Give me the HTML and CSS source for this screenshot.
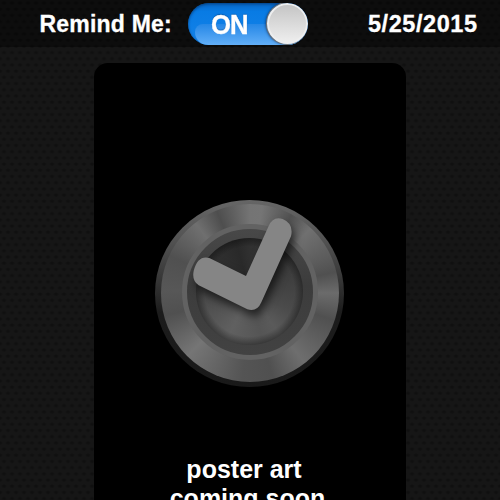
FILE: index.html
```
<!DOCTYPE html>
<html lang="en">
<head>
<meta charset="utf-8">
<title>Reminder</title>
<link rel="stylesheet" href="styles.css">
</head>
<body>
<header class="bar">
  <span class="label">Remind Me:</span>
  <div class="switch" role="switch" aria-checked="true"><span class="state">ON</span><span class="knob"></span></div>
  <time class="date">5/25/2015</time>
</header>
<main class="poster">
  <div class="badge">
    <div class="face"></div>
    <div class="ring"></div>
    <div class="well"></div>
    <svg class="check" viewBox="0 0 630 630" width="210" height="210" aria-hidden="true">
      <path d="M303 258L371 108Q384 78 413 87Q447 101 438 139L349 337Q336 367 307 358L161 286Q140 272 146 243Q158 195 193 204Z"/>
    </svg>
  </div>
  <p class="caption">poster art&nbsp;<br>coming soon</p>
</main>
</body>
</html>
```
FILE: styles.css
```
* { box-sizing: border-box; }
html, body { height: 100%; }
body {
  margin: 0;
  overflow: hidden;
  color: #fff;
  font-family: "Liberation Sans", Arial, sans-serif;
  font-weight: bold;
  background-color: #161616;
  background-image:
    radial-gradient(ellipse 3px 2px at 4px 3px, #101010 40%, transparent 100%),
    radial-gradient(ellipse 3px 2px at 4px 3px, #101010 40%, transparent 100%);
  background-size: 8px 12.4px;
  background-position: 0 0, 4px 6.2px;
}
.bar {
  display: grid;
  grid-template-columns: 187px 121px 1fr;
  height: 47px;
  background: rgba(0, 0, 0, .4);
}
.label, .date {
  font-size: 23px;
  line-height: 48px;
  letter-spacing: .2px;
  white-space: nowrap;
  -webkit-text-stroke: .3px #fff;
  stroke-linejoin: round;
}
.label { padding-left: 39.5px; }
.date { padding-left: 60px; font-size: 23.5px; letter-spacing: .55px; }
.switch {
  display: flex;
  justify-content: space-between;
  width: 120px;
  height: 42px;
  margin: 3px 0 0 1px;
  border-radius: 21px;
  position: relative;
  overflow: hidden;
  background: linear-gradient(#0866c4, #087be4 20%, #1683e8);
  box-shadow: inset 0 1px 3px #033f80;
}
.switch::before {
  content: "";
  position: absolute;
  left: 7px;
  right: 5px;
  top: 21px;
  height: 21px;
  border-radius: 12px 0 0 20px;
  background: linear-gradient(#2587e6, #62aff8);
}
.state {
  position: relative;
  padding-left: 23px;
  font-size: 27px;
  line-height: 44px;
  letter-spacing: -1px;
  transform: scaleX(.95);
  transform-origin: 23px 0;
  -webkit-text-stroke: .4px #fff;
  text-shadow: 0 -1px 1px #0758a8;
}
.knob {
  position: relative;
  width: 41px;
  height: 41px;
  border: 2px solid #eee;
  border-radius: 50%;
  background: linear-gradient(#c5c5c5, #eee);
  box-shadow: 0 0 0 1px #777, -1px 0 3px #124;
}
.poster {
  display: flex;
  flex-direction: column;
  align-items: center;
  width: 312px;
  height: 460px;
  margin: 16px 0 0 94px;
  padding-top: 137px;
  border-radius: 14px;
  background: #000;
}
.badge {
  display: grid;
  grid-template: 187px / 189px;
  flex: none;
  place-items: center;
  width: 189px;
  height: 187px;
  margin-right: 1px;
  border-radius: 50%;
  background: linear-gradient(#666, #545454 20%, #333 45%, #1c1c1c 60%, #191919);
}
.badge > * { grid-area: 1 / 1; border-radius: 50%; }
.face {
  width: 178px;
  height: 178px;
  margin-top: -1px;
  background: conic-gradient(#747474, #757575 8deg, #515151 28deg, #707070 43deg, #5c5c5c 65deg, #505050 76deg, #6b6b6b 90deg, #505050 108deg, #6e6e6e 142deg, #505050 165deg, #545454 185deg, #757575 225deg, #505050 255deg, #575757 272deg, #505050 295deg, #6f6f6f 322deg, #4e4e4e 338deg, #747474);
}
.ring {
  width: 136px;
  height: 136px;
  margin-top: -3px;
  border: 5px solid #626262;
  background: linear-gradient(#484848, #3c3c3c 45%, #424242);
}
.well {
  width: 107px;
  height: 107px;
  margin-top: -5px;
  background: radial-gradient(closest-side, transparent 84%, rgba(0, 0, 0, .35)), conic-gradient(#303030, #3c3c3c 60deg, #444 90deg, #4b4b4b 115deg, #5a5a5a 145deg, #555 165deg, #606060 205deg, #4b4b4b 260deg, #303030 315deg, #292929 345deg, #303030);
}
.badge .check {
  align-self: start;
  margin: -10px;
  border-radius: 0;
  overflow: visible;
  fill: #858585;
  filter: drop-shadow(3px 6px 4px rgba(0, 0, 0, .6));
}
.caption {
  margin: 68px 5px 0 0;
  font-size: 25px;
  line-height: 28.5px;
  text-align: center;
}
```
